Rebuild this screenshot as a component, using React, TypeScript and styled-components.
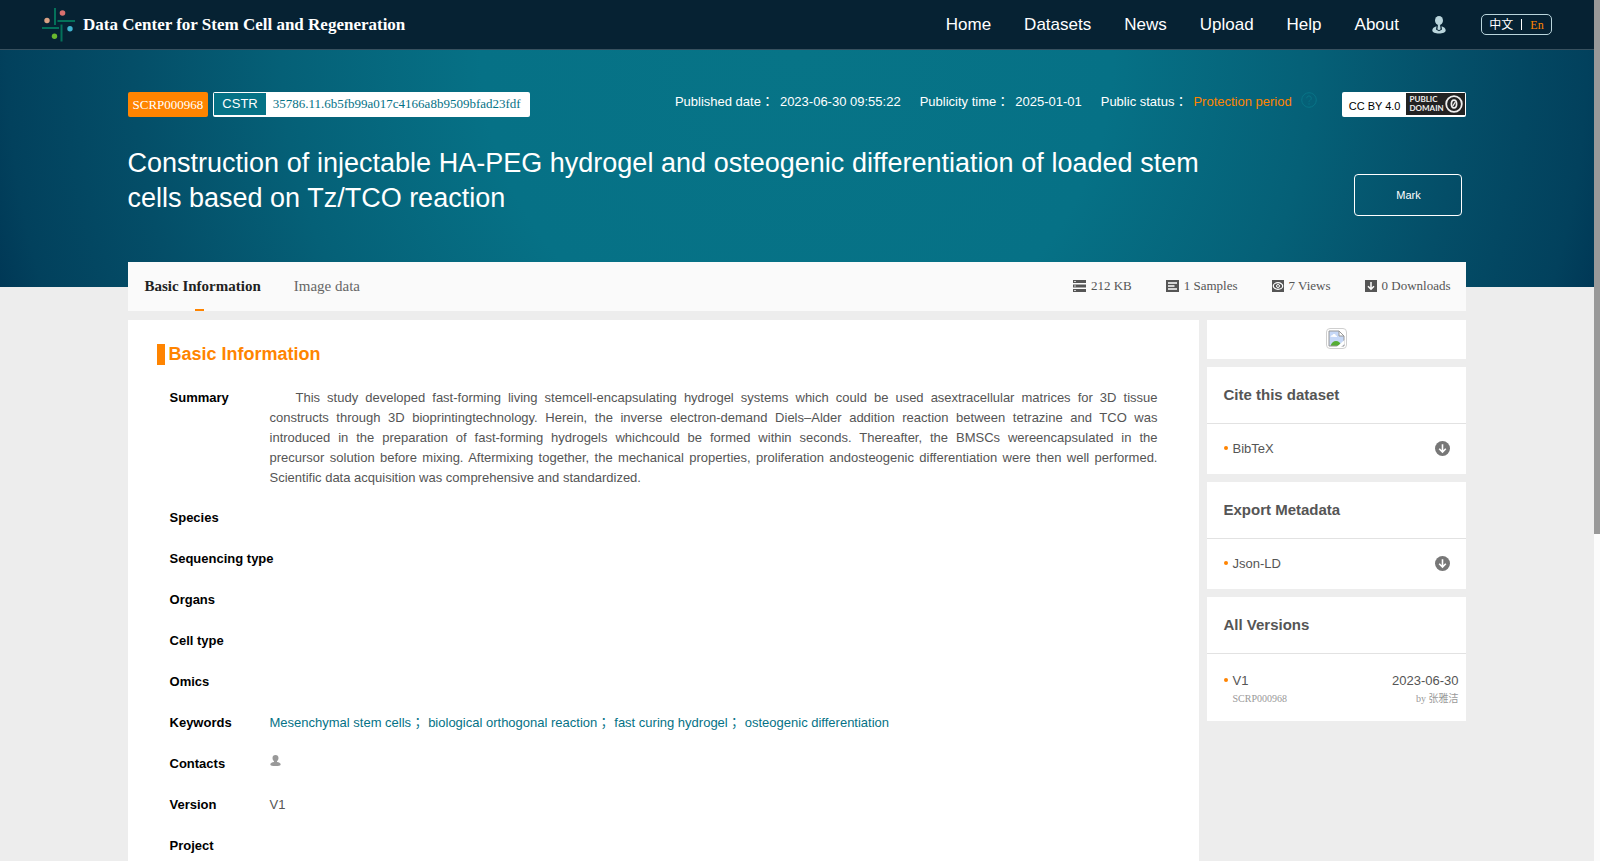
import React from 'react';
import styled, { createGlobalStyle } from 'styled-components';

const sans = `'Liberation Sans', 'Noto Sans CJK TC', sans-serif`;
const serif = `'Liberation Serif', 'Noto Sans CJK JP', serif`;
const orange = '#ff8400';
const teal = '#057286';

const GlobalStyle = createGlobalStyle`
  *, *::before, *::after { box-sizing: border-box; }
  body { margin: 0; background: #ededed; color: #555; font: 13px/20px ${sans}; }
  h1, h2, h3, p, dl, dd, ul { margin: 0; padding: 0; }
  a { color: inherit; text-decoration: none; }
  button { font: inherit; cursor: pointer; }
  svg { display: block; flex: none; }
`;

const Frame = styled.div`
  display: grid;
  grid-template-columns: minmax(0, 1fr) 6px;
  height: 100vh;
`;

const Scroller = styled.div`
  overflow-y: auto;
  scrollbar-width: none;
`;

const ScrollRail = styled.div`
  background: #fcfcfc;
`;

const ScrollThumb = styled.div`
  height: 62%;
  background: #999;
`;

const Header = styled.header`
  display: flex;
  align-items: center;
  justify-content: space-between;
  height: 50px;
  padding: 0 42px;
  background: #062233;
  border-bottom: 1px solid #37505e;
`;

const Brand = styled.a`
  display: flex;
  align-items: center;
  gap: 8px;
  color: #fff;
  font: bold 17px/24px ${serif};
`;

const Nav = styled.nav`
  display: flex;
  align-items: center;
  gap: 33px;
`;

const NavLink = styled.a`
  color: #fff;
  font-size: 17px;
`;

const LanguageSwitch = styled.div`
  display: flex;
  align-items: center;
  justify-content: center;
  gap: 8px;
  width: 71px;
  height: 21px;
  margin-left: 2px;
  border: 1px solid #b9d5dc;
  border-radius: 5px;
`;

const Language = styled.button<{ $active?: boolean }>`
  padding: 0;
  border: 0;
  background: none;
  color: ${({ $active }) => ($active ? orange : '#fff')};
  font: 12px/16px ${serif};
`;

const Divider = styled.span`
  width: 1px;
  height: 11px;
  background: #fff;
`;

const Hero = styled.section`
  height: 237px;
  padding: 42px 8% 0;
  background: radial-gradient(
    circle at 50% 0,
    #077487 0%,
    #067186 38%,
    #056077 62%,
    #044e68 80%,
    #02415d 95%,
    #003856 100%
  );
`;

const HeroRow = styled.div`
  display: flex;
  justify-content: space-between;
`;

const Badges = styled.div`
  display: flex;
  gap: 5px;
`;

const IdBadge = styled.span`
  padding: 0 5px;
  border-radius: 2px;
  background: ${orange};
  color: #fff;
  font: 13px/25px ${serif};
`;

const CstrBadge = styled.a`
  display: flex;
  height: 25px;
  padding: 1px 9px 2px 1px;
  border-radius: 2px;
  background: #fff;
  color: ${teal};
  font: 13px/22px ${serif};
`;

const CstrLabel = styled.span`
  margin-right: 7px;
  padding: 0 8px;
  background: ${teal};
  color: #fff;
  font-family: ${sans};
`;

const HeroMeta = styled.div`
  display: flex;
  align-items: flex-start;
`;

const MetaItem = styled.span`
  display: flex;
  gap: 6px;
  margin-right: 19px;
  color: #fff;
`;

const Status = styled.span`
  color: ${orange};
`;

const HelpButton = styled.button`
  margin: 0 25px 0 -10px;
  padding: 0;
  border: 0;
  background: none;
`;

const License = styled.a`
  display: flex;
  height: 25px;
  padding: 1px 1px 2px 7px;
  gap: 6px;
  border-radius: 2px;
  background: #fff;
  color: #000;
  font-size: 11px;
  line-height: 26px;
`;

const PublicDomain = styled.span`
  display: flex;
  align-items: center;
  justify-content: space-between;
  width: 59px;
  padding: 0 2px 0 3px;
  background: #222;
  color: #eee;
  font: bold 8px/9px Lato, sans-serif;
`;

const TitleRow = styled.div`
  display: flex;
  justify-content: space-between;
  align-items: center;
  margin-top: 29px;
`;

const Title = styled.h1`
  width: 80%;
  color: #fff;
  font-size: 27px;
  font-weight: normal;
  line-height: 35px;
  text-align: justify;
`;

const MarkButton = styled.button`
  width: 108px;
  height: 42px;
  margin: 28px 4px 0 0;
  border: 1px solid #fff;
  border-radius: 4px;
  background: transparent;
  color: #fff;
  font-size: 11px;
`;

const Content = styled.main`
  position: relative;
  margin: -25px 8% 0;
`;

const TabBar = styled.div`
  display: flex;
  align-items: stretch;
  justify-content: space-between;
  height: 49px;
  padding: 0 16px 0 17px;
  background: #fafafa;
`;

const Tabs = styled.div`
  display: flex;
  gap: 33px;
`;

const Tab = styled.button<{ $active?: boolean }>`
  position: relative;
  padding: 0 0 2px;
  border: 0;
  background: none;
  color: ${({ $active }) => ($active ? '#222' : '#666')};
  font: ${({ $active }) => ($active ? 'bold' : 'normal')} 15px/46px ${serif};

  &::after {
    content: '';
    display: ${({ $active }) => ($active ? 'block' : 'none')};
    position: absolute;
    bottom: 0;
    left: 50px;
    width: 9px;
    height: 2px;
    background: ${orange};
  }
`;

const Stats = styled.ul`
  display: flex;
  gap: 34px;
  padding-bottom: 2px;
  list-style: none;
  font-family: ${serif};
`;

const Stat = styled.li`
  display: flex;
  align-items: center;
  gap: 5px;
`;

const Columns = styled.div`
  display: grid;
  grid-template-columns: minmax(0, 1fr) 259px;
  gap: 8px;
  margin-top: 9px;
`;

const Panel = styled.section`
  min-height: 1020px;
  padding: 24px 42px 0 29px;
  background: #fff;
`;

const PanelTitle = styled.h2`
  padding-left: 4px;
  border-left: 8px solid ${orange};
  color: ${orange};
  font-size: 18px;
  line-height: 21px;
`;

const Fields = styled.dl`
  padding: 23px 0 0 13px;
`;

const Field = styled.div`
  display: grid;
  grid-template-columns: 100px minmax(0, 1fr);
  min-height: 21px;
  margin-bottom: 20px;
`;

const FieldName = styled.dt`
  color: #000;
  font-weight: bold;
  white-space: nowrap;
`;

const FieldValue = styled.dd`
  text-align: justify;
`;

const Summary = styled.p`
  text-indent: 26px;
`;

const Keyword = styled.a`
  margin-right: 4px;
  color: ${teal};
`;

const Side = styled.aside`
  display: flex;
  flex-direction: column;
  gap: 8px;
`;

const Card = styled.section`
  background: #fff;
`;

const ImageCard = styled(Card)`
  display: flex;
  align-items: center;
  justify-content: center;
  height: 39px;
  padding-bottom: 2px;
`;

const CardTitle = styled.h3`
  padding-left: 16px;
  border-bottom: 1px solid #e2e2e2;
  color: #555;
  font-size: 15px;
  line-height: 56px;
`;

const CardRow = styled.div`
  display: flex;
  align-items: center;
  justify-content: space-between;
  height: 50px;
  padding: 0 16px 0 17px;
`;

const Item = styled.span`
  display: flex;
  gap: 4px;

  &::before {
    content: '';
    width: 4px;
    height: 4px;
    margin-top: 7px;
    border-radius: 50%;
    background: ${orange};
  }
`;

const IconButton = styled.button`
  padding: 0 0 1px;
  border: 0;
  background: none;
`;

const VersionBody = styled.div`
  padding: 17px 8px 14px 17px;
`;

const VersionLine = styled.div`
  display: flex;
  justify-content: space-between;
`;

const VersionNote = styled(VersionLine)`
  padding-left: 8px;
  color: #999;
  font: 10px/16px ${serif};
`;

const Logo = () => (
  <svg width="33" height="34" viewBox="0 0 33 34" aria-hidden="true">
    <path d="M13 0v17M15.500 13h17.500M0 20h17M19.500 16.500v17" stroke="#04715a" strokeWidth="2" />
    <circle cx="20.500" cy="5" r="2.800" fill="#d9706f" />
    <circle cx="5" cy="12.500" r="2.700" fill="#d9a184" />
    <circle cx="28" cy="20.800" r="2.700" fill="#41b4d0" />
    <circle cx="12.500" cy="28.300" r="2.700" fill="#6ab82f" />
  </svg>
);

const UserIcon = () => (
  <svg width="14" height="18" viewBox="0 0 14 18" aria-hidden="true">
    <ellipse cx="7" cy="4.500" rx="4" ry="4.500" fill="#b9d5dc" />
    <path
      d="M4.500 10.300C2 11 .3 12.500.3 14.300C.3 16.500 3.300 17.600 7 17.600S13.700 16.500 13.700 14.300C13.700 12.500 12 11 9.500 10.300L10 13.500 7 15.300 4 13.500z"
      fill="#b9d5dc"
    />
    <path d="M6 8.500h2l.6 4.700L7 14.200l-1.600-1z" fill="#b9d5dc" />
  </svg>
);

const HelpIcon = () => (
  <svg width="16" height="16" viewBox="0 0 16 16" fill="none" stroke="#087487" aria-hidden="true">
    <circle cx="8" cy="8" r="7.300" />
    <path d="M5.700 6.200a2.300 2.300 0 1 1 3.500 2C8.300 8.800 8 9.200 8 10.200M8 11.300v1.300" />
  </svg>
);

const ZeroIcon = () => (
  <svg width="18" height="18" viewBox="0 0 18 18" fill="none" stroke="#eee" aria-hidden="true">
    <circle cx="9" cy="9" r="7.800" strokeWidth="1.800" />
    <ellipse cx="9" cy="9" rx="2.600" ry="3.900" strokeWidth="1.700" />
    <path d="M7.800 11l2.500-4" strokeWidth="1.300" />
  </svg>
);

const StorageIcon = () => (
  <svg width="13" height="12" viewBox="0 0 13 12" aria-hidden="true">
    <path d="M0 0h13v3H0zM0 4.500h13v3H0zM0 9h13v3H0z" fill="#555" />
    <path d="M1.300 1h1.400v1H1.300zM1.300 5.500h1.400v1H1.300zM1.300 10h1.400v1H1.300z" fill="#fff" />
  </svg>
);

const SamplesIcon = () => (
  <svg width="13" height="12" viewBox="0 0 13 12" aria-hidden="true">
    <path d="M0 0h13v12H0z" fill="#555" />
    <path d="M2 3h9M2 6h6.500M2 9h9" stroke="#fff" strokeWidth="1.300" />
  </svg>
);

const ViewsIcon = () => (
  <svg width="12" height="12" viewBox="0 0 12 12" aria-hidden="true">
    <path d="M0 0h12v12H0z" fill="#555" />
    <ellipse cx="6" cy="6" rx="4.700" ry="3.300" fill="none" stroke="#fff" strokeWidth="1.200" />
    <circle cx="6" cy="6" r="1.500" fill="none" stroke="#fff" />
  </svg>
);

const DownloadsIcon = () => (
  <svg width="12" height="12" viewBox="0 0 12 12" aria-hidden="true">
    <path d="M0 0h12v12H0z" fill="#555" />
    <path d="M6 2v7M3 6.200l3 3 3-3" fill="none" stroke="#fff" strokeWidth="1.500" />
  </svg>
);

const DownIcon = () => (
  <svg width="15" height="15" viewBox="0 0 15 15" aria-hidden="true">
    <circle cx="7.500" cy="7.500" r="7.500" fill="#777" />
    <path d="M7.500 3.300v7.500M4.200 7.700l3.300 3.300 3.300-3.300" fill="none" stroke="#fff" strokeWidth="1.600" />
  </svg>
);

const PersonIcon = () => (
  <svg width="11" height="13" viewBox="0 0 11 13" aria-hidden="true">
    <path
      d="M5.500 1C7.400 1 8.500 2.200 8.500 3.900S7.600 6.700 7 7.200V8C9.200 8.400 10.700 9.200 10.700 10.400C10.700 11.700 8.500 12 5.500 12S.3 11.700.3 10.400C.3 9.200 1.800 8.400 4 8V7.200C3.400 6.700 2.500 5.600 2.500 3.900S3.600 1 5.500 1z"
      fill="#999"
    />
  </svg>
);

const MissingImage = () => (
  <svg width="21" height="21" viewBox="0 0 21 21" role="img" aria-label="QR code">
    <rect x=".5" y=".5" width="20" height="20" rx="3.500" fill="#fff" stroke="#cfcfcf" />
    <path d="M3 3h10l5 5v10H3z" fill="#c6d8f7" />
    <path d="M4.500 8.800c0-1.400 1.600-1.600 2-1.600.4-1.600 3-1.500 3.200.2 1.400 0 1.400 1.400 1.300 1.500z" fill="#fff" />
    <path d="M4.500 18c1-3.200 3-5 5.500-5s4.500 1.800 5.500 5z" fill="#55ad35" />
    <path d="M3 3h10l5 5v10H3z" fill="none" stroke="#989898" />
    <path d="M10.500 19l8-7v4l-3.500 3z" fill="#fff" />
    <path d="M13 3v5h5z" fill="#fff" stroke="#989898" />
  </svg>
);

const navItems = ['Home', 'Datasets', 'News', 'Upload', 'Help', 'About'];

const keywords = [
  'Mesenchymal stem cells',
  'biological orthogonal reaction',
  'fast curing hydrogel',
  'osteogenic differentiation',
];

const stats: [React.ReactNode, string][] = [
  [<StorageIcon />, '212 KB'],
  [<SamplesIcon />, '1 Samples'],
  [<ViewsIcon />, '7 Views'],
  [<DownloadsIcon />, '0 Downloads'],
];

const fields: [string, React.ReactNode][] = [
  [
    'Summary',
    <Summary>
      This study developed fast-forming living stemcell-encapsulating hydrogel systems which could be used
      asextracellular matrices for 3D tissue constructs through 3D bioprintingtechnology. Herein, the inverse
      electron-demand Diels–Alder addition reaction between tetrazine and TCO was introduced in the preparation of
      fast-forming hydrogels whichcould be formed within seconds. Thereafter, the BMSCs wereencapsulated in the
      precursor&nbsp;solution before mixing. Aftermixing together, the mechanical properties, proliferation
      andosteogenic differentiation were then well performed. Scientific data acquisition was comprehensive and
      standardized.
    </Summary>,
  ],
  ['Species', null],
  ['Sequencing type', null],
  ['Organs', null],
  ['Cell type', null],
  ['Omics', null],
  [
    'Keywords',
    keywords.map((word, i) => (
      <Keyword href="#" key={word}>
        {word}
        {i < keywords.length - 1 && '；'}
      </Keyword>
    )),
  ],
  ['Contacts', <PersonIcon />],
  ['Version', 'V1'],
  ['Project', null],
];

const DownloadCard = ({ title, format }: { title: string; format: string }) => (
  <Card>
    <CardTitle>{title}</CardTitle>
    <CardRow>
      <Item>{format}</Item>
      <IconButton aria-label={`Download ${format}`}>
        <DownIcon />
      </IconButton>
    </CardRow>
  </Card>
);

export default function App() {
  return (
    <Frame>
      <GlobalStyle />
      <Scroller>
        <Header>
          <Brand href="#">
            <Logo />
            Data Center for Stem Cell and Regeneration
          </Brand>
          <Nav>
            {navItems.map((item) => (
              <NavLink href="#" key={item}>
                {item}
              </NavLink>
            ))}
            <NavLink href="#" aria-label="Account">
              <UserIcon />
            </NavLink>
            <LanguageSwitch>
              <Language>中文</Language>
              <Divider />
              <Language $active>En</Language>
            </LanguageSwitch>
          </Nav>
        </Header>

        <Hero>
          <HeroRow>
            <Badges>
              <IdBadge>SCRP000968</IdBadge>
              <CstrBadge href="#">
                <CstrLabel>CSTR</CstrLabel>
                35786.11.6b5fb99a017c4166a8b9509bfad23fdf
              </CstrBadge>
            </Badges>
            <HeroMeta>
              <MetaItem>
                <span>Published date：</span>
                <span>2023-06-30 09:55:22</span>
              </MetaItem>
              <MetaItem>
                <span>Publicity time：</span>
                <span>2025-01-01</span>
              </MetaItem>
              <MetaItem>
                <span>Public status：</span>
                <Status>Protection period</Status>
              </MetaItem>
              <HelpButton aria-label="About the public status">
                <HelpIcon />
              </HelpButton>
              <License href="#">
                CC BY 4.0
                <PublicDomain>
                  <span>
                    PUBLIC
                    <br />
                    DOMAIN
                  </span>
                  <ZeroIcon />
                </PublicDomain>
              </License>
            </HeroMeta>
          </HeroRow>
          <TitleRow>
            <Title>
              Construction of injectable HA-PEG hydrogel and osteogenic differentiation of loaded stem cells based on
              Tz/TCO reaction
            </Title>
            <MarkButton>Mark</MarkButton>
          </TitleRow>
        </Hero>

        <Content>
          <TabBar>
            <Tabs>
              <Tab $active>Basic Information</Tab>
              <Tab>Image data</Tab>
            </Tabs>
            <Stats>
              {stats.map(([icon, text]) => (
                <Stat key={text}>
                  {icon}
                  {text}
                </Stat>
              ))}
            </Stats>
          </TabBar>
          <Columns>
            <Panel>
              <PanelTitle>Basic Information</PanelTitle>
              <Fields>
                {fields.map(([name, value]) => (
                  <Field key={name}>
                    <FieldName>{name}</FieldName>
                    <FieldValue>{value}</FieldValue>
                  </Field>
                ))}
              </Fields>
            </Panel>
            <Side>
              <ImageCard>
                <MissingImage />
              </ImageCard>
              <DownloadCard title="Cite this dataset" format="BibTeX" />
              <DownloadCard title="Export Metadata" format="Json-LD" />
              <Card>
                <CardTitle>All Versions</CardTitle>
                <VersionBody>
                  <VersionLine>
                    <Item>V1</Item>
                    <span>2023-06-30</span>
                  </VersionLine>
                  <VersionNote>
                    <span>SCRP000968</span>
                    <span>by 张雅洁</span>
                  </VersionNote>
                </VersionBody>
              </Card>
            </Side>
          </Columns>
        </Content>
      </Scroller>
      <ScrollRail>
        <ScrollThumb />
      </ScrollRail>
    </Frame>
  );
}
